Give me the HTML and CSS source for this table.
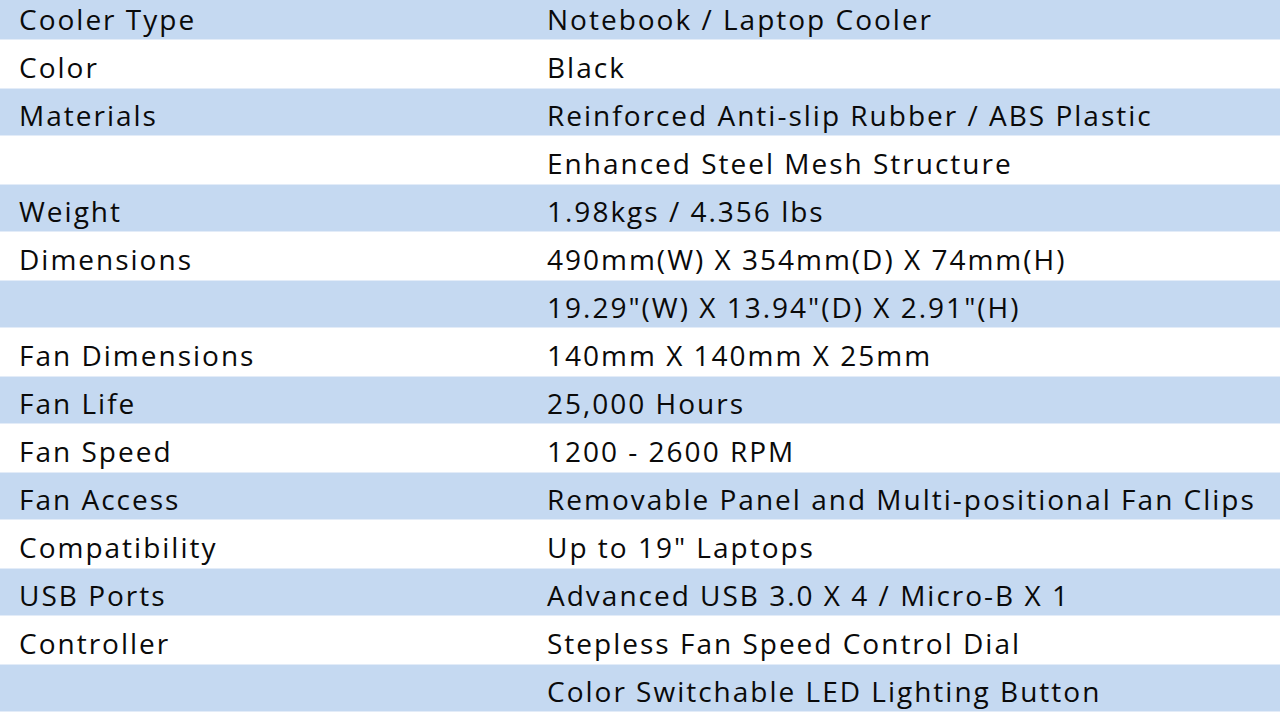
FILE: index.html
```html
<!DOCTYPE html>
<html>
<head>
<meta charset="utf-8">
<link rel="stylesheet" href="styles.css">
</head>
<body>
<div class="specs">
  <div class="row alt"><div class="k">Cooler Type</div><div class="v">Notebook / Laptop Cooler</div></div>
  <div class="row"><div class="k">Color</div><div class="v">Black</div></div>
  <div class="row alt"><div class="k">Materials</div><div class="v">Reinforced Anti-slip Rubber / ABS Plastic</div></div>
  <div class="row"><div class="k"></div><div class="v">Enhanced Steel Mesh Structure</div></div>
  <div class="row alt"><div class="k">Weight</div><div class="v">1.98kgs / 4.356 lbs</div></div>
  <div class="row"><div class="k">Dimensions</div><div class="v">490mm(W) X 354mm(D) X 74mm(H)</div></div>
  <div class="row alt"><div class="k"></div><div class="v">19.29"(W) X 13.94"(D) X 2.91"(H)</div></div>
  <div class="row"><div class="k">Fan Dimensions</div><div class="v">140mm X 140mm X 25mm</div></div>
  <div class="row alt"><div class="k">Fan Life</div><div class="v">25,000 Hours</div></div>
  <div class="row"><div class="k">Fan Speed</div><div class="v">1200 - 2600 RPM</div></div>
  <div class="row alt"><div class="k">Fan Access</div><div class="v">Removable Panel and Multi-positional Fan Clips</div></div>
  <div class="row"><div class="k">Compatibility</div><div class="v">Up to 19" Laptops</div></div>
  <div class="row alt"><div class="k">USB Ports</div><div class="v">Advanced USB 3.0 X 4 / Micro-B X 1</div></div>
  <div class="row"><div class="k">Controller</div><div class="v">Stepless Fan Speed Control Dial</div></div>
  <div class="row alt"><div class="k"></div><div class="v">Color Switchable LED Lighting Button</div></div>
</div>
</body>
</html>
```

FILE: styles.css
```css
html, body {
  margin: 0;
  padding: 0;
  background: #ffffff;
  overflow: hidden;
}
body {
  font-family: "Open Sans", Lato, sans-serif;
  color: #0a0a0a;
}
.specs {
  margin-top: -8px;
  display: flex;
  flex-direction: column;
}
.row {
  display: grid;
  grid-template-columns: 528px 1fr;
  height: 48px;
  align-items: center;
  font-size: 28px;
  letter-spacing: 2px;
  box-sizing: border-box;
  padding-left: 19px;
  padding-top: 6px;
}
.row.alt {
  background: #c5d9f1;
  border-bottom: 1px solid #e3ecf8;
  border-top: 1px solid #e3ecf8;
}
.k, .v {
  white-space: nowrap;
  line-height: 1;
}
```
